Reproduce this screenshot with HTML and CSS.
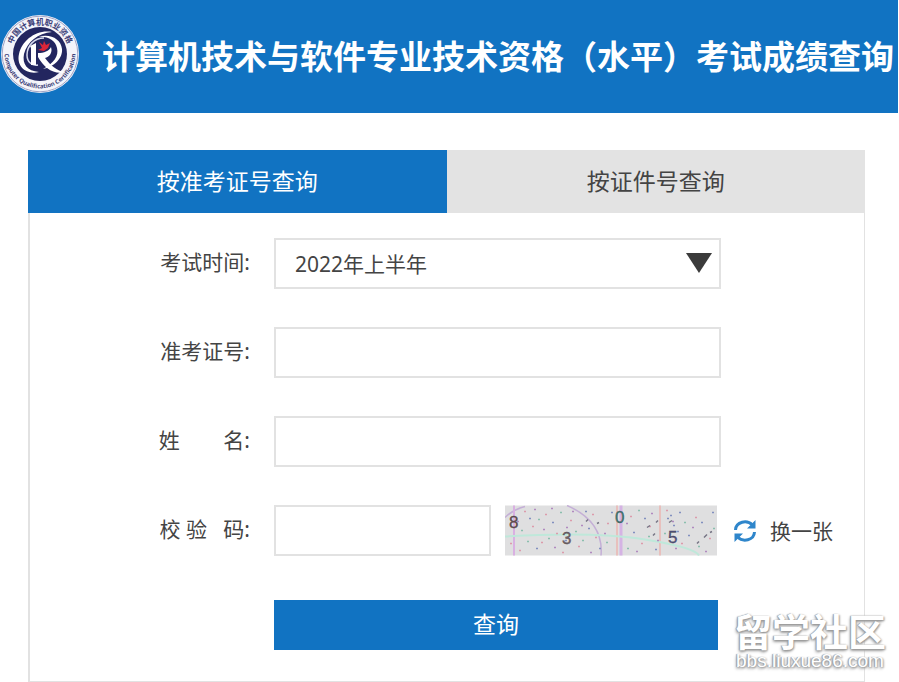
FILE: index.html
```html
<!DOCTYPE html>
<html lang="zh-CN">
<head>
<meta charset="utf-8">
<meta name="viewport" content="width=device-width, initial-scale=1">
<title>成绩查询</title>
<link rel="stylesheet" href="styles.css">
</head>
<body>
<header class="banner">
  <svg class="emblem" viewBox="0 0 80 80" aria-hidden="true">
    <defs>
      <path id="arc-top" d="M11.500 45A29 29 0 1 1 68.500 45"/>
      <path id="arc-bottom" d="M5 33A35.500 35.500 0 1 0 75 33"/>
    </defs>
    <circle cx="40" cy="40" r="39" fill="#f4f4fa"/>
    <circle cx="40" cy="40" r="37.800" fill="none" stroke="#8c8fb8" stroke-width=".8"/>
    <circle cx="40" cy="40" r="27" fill="#23265f"/>
    <text class="emblem-cn"><textPath href="#arc-top" startOffset="50%" text-anchor="middle">中国计算机职业资格</textPath></text>
    <text class="emblem-en"><textPath href="#arc-bottom" startOffset="50%" text-anchor="middle">Computer Qualification Certification</textPath></text>
    <path d="M52 18C37 15 22 26 19 40C16 53 27 61 39 58C27 57 22 50 24 40C27 28 38 19 52 18Z" fill="#fff"/>
    <path d="M38 23C50 19 61 25 62 35C63 44 54 53 43 55C54 49 59 42 57 34C55 26 48 22 38 23Z" fill="#fff"/>
    <path d="M44 24C34 24 27 32 27 41C27 48 32 52 38 51" fill="none" stroke="#d9dcef" stroke-width="1.500"/>
    <path d="M30 32L36 29V51H31V34Z" fill="#fff"/>
    <path d="M38 39C44 39 49 37 51 33C53 39 49 43 45 44C50 51 57 57 65 58C54 61 44 54 38 43Z" fill="#fff"/>
    <path d="M39 28L43 31L44 27L46 31L50 29L48 34L44 37L38 36L42 34Z" fill="#dc2638"/>
  </svg>
  <h1 class="banner-title">计算机技术与软件专业技术资格（水平）考试成绩查询</h1>
</header>

<main class="panel">
  <div class="tabs" role="tablist">
    <button class="tab tab-active" type="button" role="tab" aria-selected="true">按准考证号查询</button>
    <button class="tab" type="button" role="tab" aria-selected="false">按证件号查询</button>
  </div>
  <form class="form">
    <div class="row">
      <label class="label" for="exam-time">考试时间:</label>
      <div class="select-wrap">
        <select class="field select" id="exam-time"><option>2022年上半年</option></select>
        <svg class="caret" viewBox="0 0 26 20" aria-hidden="true"><path d="M0 0H26L13 20Z" fill="#3b3b3b"/></svg>
      </div>
    </div>
    <div class="row">
      <label class="label" for="ticket">准考证号:</label>
      <input class="field" id="ticket" type="text">
    </div>
    <div class="row">
      <label class="label" for="name">姓&nbsp;&nbsp;&nbsp;&nbsp;&nbsp;&nbsp;&nbsp;&nbsp;名:</label>
      <input class="field" id="name" type="text">
    </div>
    <div class="row">
      <label class="label" for="code">校&nbsp;验&nbsp;&nbsp;&nbsp;码:</label>
      <input class="field field-code" id="code" type="text">
      <svg class="captcha" viewBox="0 0 212 50" role="img" aria-label="8 3 0 5">
        <path fill="#dfdfe0" d="M0 0H212V50H0Z"/>
        <g fill="none" stroke-width="1.500">
          <path d="M0 12Q8 4 20 1M62 0Q99 16 96 50" stroke="#c4afd6"/>
          <path d="M9 0V50" stroke="#d9b0e2" stroke-width="2"/>
          <path d="M116 0V50" stroke="#d5b3e4" stroke-width="3"/>
          <path d="M112 0V50M155 0V50" stroke="#e8c0bd" stroke-width="2"/>
          <path d="M0 31Q90 26 140 34T194 50" stroke="#bfe8da" stroke-width="2"/>
        </g>
        <g fill="none" stroke-width="1.500">
          <path stroke="#dc9bab" d="M19 6h2M27 21h2M40 9h2M36 37h2M51 28h2M65 15h2M73 41h2M87 9h2M90 32h2M102 18h2M125 11h2M136 38h2M144 21h2M161 5h2M176 38h2M190 12h2M204 33h2M14 45h2M57 47h2M5 38h2"/>
          <path stroke="#8290bf" d="M24 13h2M31 43h2M47 17h2M60 35h2M80 6h2M83 23h2M94 43h2M106 7h2M128 27h2M139 13h2M150 44h2M162 13h2M168 20h2M174 7h2M183 30h2M196 17h2M207 7h2M165 10h2M172 26h2"/>
          <path stroke="#8bbfae" d="M16 25h2M33 14h2M43 33h2M55 7h2M70 26h2M77 35h2M101 37h2M122 43h2M133 5h2M143 31h2M159 28h2M179 17h2M193 41h2M208 23h2M22 36h2"/>
          <path stroke="#b18abf" d="M12 16h2M29 4h2M38 24h2M49 42h2M67 6h2M76 20h2M85 47h2M99 28h2M121 18h2M131 46h2M146 8h2M152 35h2M170 43h2M187 22h2M200 46h2M167 16h2M46 3h2M61 22h2"/>
          <path stroke="#767484" d="M81 16l2-2M142 22l3-2M151 17l2-2M164 17l3-2M199 32l3-3M192 38l2-2M148 30l2-2M205 27l2-1M92 18l2-1"/>
        </g>
        <g class="captcha-digits">
          <text x="4" y="22" fill="#684b50">8</text>
          <text x="57" y="38" fill="#76636c">3</text>
          <text x="110" y="17" fill="#397d78">0</text>
          <text x="163" y="37" fill="#4d4f86">5</text>
        </g>
      </svg>
      <a class="refresh" href="#">
        <svg class="refresh-icon" viewBox="0 0 24 24" aria-hidden="true">
          <g fill="none" stroke="#2f86cb" stroke-width="3">
            <path d="M2.500 11C3 2.500 14 .5 19.500 6"/>
            <path d="M21.500 13C21 21.500 10 23.500 4.500 18"/>
          </g>
          <path d="M22.500 1V9.500H14ZM1.500 23V14.500H10Z" fill="#2f86cb"/>
        </svg>
        <span>换一张</span>
      </a>
    </div>
    <button class="submit" type="submit">查询</button>
  </form>
</main>

<div class="watermark">
  <span class="watermark-name">留学社区</span>
  <span class="watermark-url">bbs.liuxue86.com</span>
</div>
</body>
</html>
```
FILE: styles.css
```css
* {
  box-sizing: border-box;
}

body {
  position: relative;
  margin: 0;
  background: #fff;
  color: #444;
  font-family: "Noto Sans", "Noto Sans CJK SC", sans-serif;
  font-size: 21px;
  line-height: 30px;
}

button,
input,
select {
  margin: 0;
  border-radius: 0;
  font: inherit;
  color: inherit;
}

.banner {
  display: flex;
  align-items: center;
  gap: 22px;
  height: 113px;
  margin-right: 1px;
  padding-bottom: 5px;
  background: #1173c2;
}

.emblem {
  flex: none;
  width: 80px;
  height: 80px;
}

.emblem-cn {
  font-size: 8px;
  font-weight: 700;
  fill: #3c3f78;
}

.emblem-en {
  font-size: 6px;
  font-weight: 700;
  fill: #3c3f78;
}

.banner-title {
  margin: 0;
  padding-top: 2px;
  color: #fff;
  font-family: "Noto Sans CJK SC", sans-serif;
  font-size: 33px;
  font-weight: 700;
  line-height: 48px;
  white-space: nowrap;
}

.panel {
  margin: 37px 34px 0 28px;
}

.tabs {
  display: grid;
  grid-template-columns: 1fr 1fr;
}

.tab {
  height: 63px;
  padding: 0 0 2px;
  border: 0;
  background: #e3e3e3;
  font-size: 23px;
}

.tab-active {
  background: #1173c2;
  color: #fff;
}

.form {
  display: flex;
  flex-direction: column;
  gap: 38px;
  padding: 25px 0 31px;
  border: 1px solid #e2e2e2;
  border-top: 0;
  border-left-width: 2px;
}

.row {
  display: flex;
  align-items: center;
}

.label {
  flex: none;
  width: 221px;
  margin-right: 23px;
  padding: 0 1px 4px 0;
  text-align: right;
  white-space: nowrap;
}

.field {
  width: 447px;
  height: 51px;
  padding: 0 19px;
  border: 2px solid #e2e2e2;
  background: #fff;
}

.field-code {
  width: 217px;
}

.select-wrap {
  position: relative;
}

.select {
  display: block;
  appearance: none;
}

.caret {
  position: absolute;
  top: 15px;
  right: 9px;
  width: 26px;
  height: 20px;
  pointer-events: none;
}

.captcha {
  flex: none;
  width: 212px;
  height: 51px;
  margin: 0 16px 0 14px;
}

.captcha-digits {
  font-family: "Liberation Sans", sans-serif;
  font-size: 17px;
  stroke: currentColor;
  stroke-width: 0.3;
}

.refresh {
  display: flex;
  align-items: center;
  gap: 13px;
  color: inherit;
  text-decoration: none;
  white-space: nowrap;
}

.refresh-icon {
  width: 24px;
  height: 24px;
}

.submit {
  width: 444px;
  height: 50px;
  margin: 6px 0 0 244px;
  padding: 0 0 2px;
  border: 0;
  background: #1173c2;
  color: #fff;
  font-size: 23px;
}

.watermark {
  position: absolute;
  right: 13px;
  bottom: 11px;
  display: flex;
  flex-direction: column;
  align-items: center;
  color: #fff;
  text-shadow: -1px 0 1px #999, 1px 1px 2px #999, -1px 2px 3px #aaa;
}

.watermark-name {
  font-size: 38px;
  font-weight: 700;
  line-height: 40px;
}

.watermark-url {
  font-family: "Liberation Sans", sans-serif;
  font-size: 19px;
  line-height: 20px;
}
```
